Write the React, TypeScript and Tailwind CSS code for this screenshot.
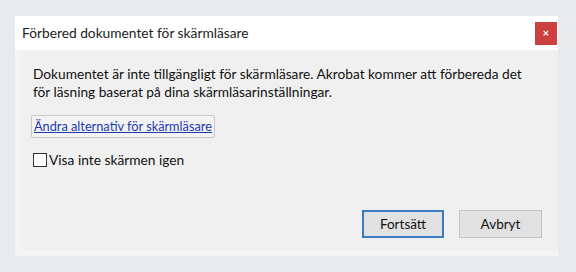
import React from "react";

export default function App() {
  return (
    <div
      className="w-[576px] h-[272px] bg-[#e8ebeb] pt-[16px] pl-[15px]"
      style={{ fontFamily: "Lato, 'Open Sans', sans-serif" }}
    >
      <div className="w-[543px] h-[240px] bg-[#f0f0f0] flex flex-col border-l-[5px] border-b-[6px] border-[#f4f4f4]">
        <div className="h-[34px] bg-white flex items-center justify-between pl-[7px] pr-[1px] -ml-[5px]">
          <span className="text-[13.75px] text-[#222]">Förbered dokumentet för skärmläsare</span>
          <div className="w-[22px] h-[23px] bg-[#cc4140] flex items-center justify-center text-white text-[11px] font-bold">
            ×
          </div>
        </div>
        <div className="flex-1 flex flex-col pl-[13px] pr-[10px] pt-[15px]">
          <p className="text-[13.7px] leading-[18px] text-[#111] whitespace-nowrap">
            Dokumentet är inte tillgängligt för skärmläsare. Akrobat kommer att förbereda det
            <br />
            för läsning baserat på dina skärmläsarinställningar.
          </p>
          <div className="mt-[12px]">
            <span className="inline-block border border-[#c8c8c8] rounded-[2px] bg-[#f3f3f3] px-[2px] h-[23px] leading-[21px] text-[12.75px] text-[#1b3bb0] underline -ml-[2px]">
              Ändra alternativ för skärmläsare
            </span>
          </div>
          <div className="mt-[12px] flex items-center gap-[2px]">
            <div className="w-[14px] h-[14px] border border-[#333] bg-white" />
            <span className="text-[13.75px] text-[#111]">Visa inte skärmen igen</span>
          </div>
          <div className="flex-1" />
          <div className="flex justify-end gap-[15px] pb-[12px] mr-[6px]">
            <div className="w-[82px] h-[28px] border-2 border-[#3c7ac0] bg-[#e1e1e1] flex items-center justify-center text-[13.5px] text-[#111]">
              Fortsätt
            </div>
            <div className="w-[83px] h-[28px] border border-[#c4c4c4] bg-[#e1e1e1] flex items-center justify-center text-[13.5px] text-[#111]">
              Avbryt
            </div>
          </div>
        </div>
      </div>
    </div>
  );
}
